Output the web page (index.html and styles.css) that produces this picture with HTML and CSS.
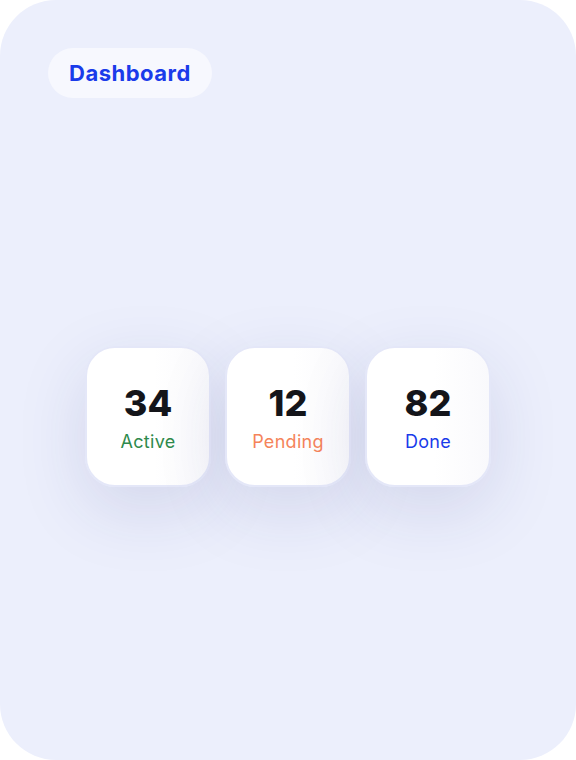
FILE: index.html
```html
<!DOCTYPE html>
<html>
  <head>
    <meta charset="utf-8">
    <title>Dashboard</title>
    <link rel="stylesheet" href="styles.css">
  </head>
  <body>
    <div class="panel">
      <div class="header">
        <span class="pill">Dashboard</span>
      </div>
      <div class="stats">
        <div class="card">
          <div class="num">34</div>
          <div class="label active">Active</div>
        </div>
        <div class="card">
          <div class="num">12</div>
          <div class="label pending">Pending</div>
        </div>
        <div class="card">
          <div class="num">82</div>
          <div class="label done">Done</div>
        </div>
      </div>
    </div>
  </body>
</html>
```

FILE: styles.css
```css
* {
box-sizing: border-box;
}
html, body {
margin: 0;
padding: 0;
background: #ffffff;
}
body {
font-family: Inter, "Open Sans", sans-serif;
}
.panel {
width: 576px;
height: 760px;
border-radius: 56px;
background-color: #eceffc;
padding: 48px;
}
.header {
display: flex;
}
.pill {
display: block;
height: 50px;
line-height: 50px;
padding: 0 21px;
border-radius: 25px;
background-color: #f7f8fe;
color: #1a3bea;
font-size: 22px;
font-weight: 700;
letter-spacing: 0.5px;
}
.stats {
display: flex;
justify-content: center;
gap: 14px;
margin-top: 248px;
}
.card {
width: 126px;
height: 141px;
padding-top: 3px;
border: 2px solid #e4e7f8;
border-radius: 30px;
background: linear-gradient(to right, #ffffff 55%, #f9f9fc);
box-shadow: 0 22px 70px rgba(40, 50, 120, 0.13);
display: flex;
flex-direction: column;
align-items: center;
justify-content: center;
}
.num {
font-size: 36px;
font-weight: 800;
color: #14151a;
line-height: 40px;
}
.label {
margin-top: 7px;
font-size: 18px;
font-weight: 400;
line-height: 24px;
letter-spacing: 0.3px;
}
.active {
color: #2f8a4c;
}
.pending {
color: #f5845a;
}
.done {
color: #1a3bea;
}
```
